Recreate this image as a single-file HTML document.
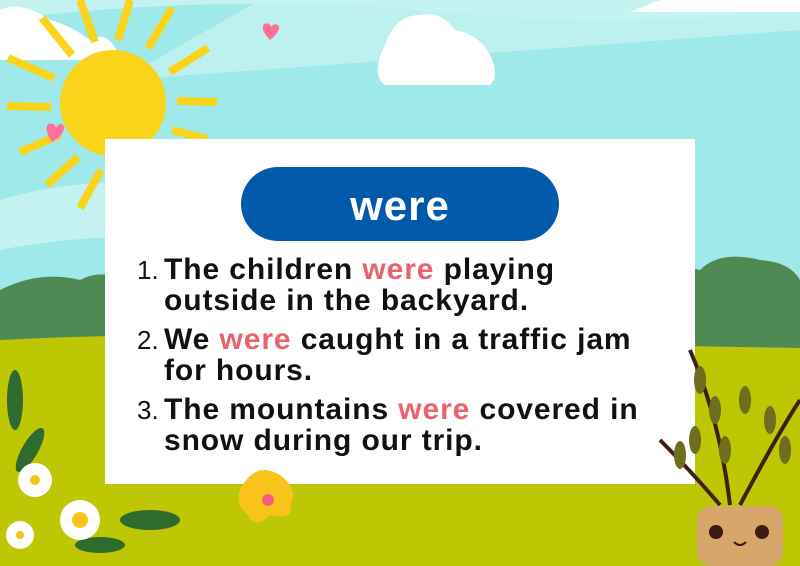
<!DOCTYPE html>
<html><head><style>
*{margin:0;padding:0}
body{width:800px;height:566px;overflow:hidden;position:relative;background:#9fe9ea;font-family:"Liberation Sans",sans-serif}
.abs{position:absolute}
.li{position:absolute;left:137px;font-weight:bold;font-size:30px;letter-spacing:0.9px;line-height:31px;color:#111;white-space:nowrap}
.li .n{display:inline-block;width:27px;font-weight:normal;letter-spacing:0;font-size:26px}
.li .t{display:inline-block;vertical-align:top}
.r{color:#e8636b}
</style></head><body>
<svg class="abs" style="left:0;top:0" width="800" height="566">
<path d="M0 0H800V10Q600 30 400 8Q200 -5 0 20Z" fill="#c4f2f1"/>
<path d="M120 80Q400 60 800 30V0H260Z" fill="#c4f2f1" opacity=".8"/>
<path d="M0 200Q100 170 220 190V240Q100 230 0 250Z" fill="#c4f2f1"/>
<path d="M0 10Q20 0 50 20Q70 25 90 40Q110 28 120 60H0Z" fill="#fff"/>
<path d="M385 45Q395 15 420 15Q440 10 455 30Q480 35 490 55Q500 75 490 85H385Q370 75 385 45Z" fill="#fff"/>
<path d="M660 0H800V12H630Z" fill="#fff"/>
<path d="M0 290Q40 270 80 280Q110 265 130 290V400H0Z" fill="#4f8a55"/>
<path d="M640 300Q660 260 700 270Q720 250 760 260Q790 262 800 280V360H640Z" fill="#4f8a55"/>
<path d="M0 340Q200 330 400 340Q600 345 800 348V566H0Z" fill="#bec703"/>
<g stroke="#f9d41a" stroke-width="8" stroke-linecap="butt">
<line x1="80" y1="0" x2="95" y2="42"/><line x1="130" y1="0" x2="118" y2="40"/>
<line x1="172" y1="8" x2="148" y2="48"/><line x1="42" y1="18" x2="72" y2="55"/>
<line x1="8" y1="58" x2="54" y2="78"/><line x1="208" y1="48" x2="170" y2="72"/>
<line x1="7" y1="106" x2="51" y2="107"/><line x1="177" y1="101" x2="217" y2="102"/>
<line x1="20" y1="152" x2="60" y2="135"/><line x1="172" y1="130" x2="207" y2="139"/>
<line x1="78" y1="157" x2="47" y2="185"/><line x1="155" y1="150" x2="187" y2="176"/>
<line x1="101" y1="170" x2="80" y2="208"/><line x1="129" y1="163" x2="140" y2="206"/>
</g>
<circle cx="113" cy="103" r="53" fill="#f9d41a"/>
<path d="M270 40Q260 30 264 24Q270 22 271 27Q275 22 279 26Q280 32 270 40Z" fill="#ff6f9c"/>
<path d="M52 142Q44 130 48 124Q54 122 56 128Q60 121 64 126Q65 135 52 142Z" fill="#ff6f9c"/>
<rect x="105" y="139" width="590" height="345" fill="#fff"/>
<rect x="241" y="167" width="318" height="74" rx="37" fill="#0059ab"/>
<text x="400" y="220" text-anchor="middle" fill="#fff" font-family="Liberation Sans" font-weight="bold" font-size="42" letter-spacing="1">were</text>
<g fill="#2f6b2e"><ellipse cx="15" cy="400" rx="8" ry="30"/><ellipse cx="30" cy="450" rx="8" ry="25" transform="rotate(30 30 450)"/><ellipse cx="150" cy="520" rx="30" ry="10"/><ellipse cx="100" cy="545" rx="25" ry="8"/></g>
<g fill="#fff"><circle cx="35" cy="480" r="17"/><circle cx="80" cy="520" r="20"/><circle cx="20" cy="535" r="14"/></g>
<circle cx="35" cy="480" r="5" fill="#f9c41a"/><circle cx="80" cy="520" r="8" fill="#f9c41a"/><circle cx="20" cy="535" r="4" fill="#f9c41a"/>
<path d="M240 490Q255 460 280 475Q300 490 290 505Q295 520 270 515Q255 530 248 515Q235 505 240 490Z" fill="#f9c41a"/>
<circle cx="268" cy="500" r="6" fill="#f2607f"/>
<g stroke="#3e2211" stroke-width="4" fill="none"><path d="M730 505Q720 420 690 350"/><path d="M740 505Q780 430 800 400"/><path d="M720 505Q690 470 660 440"/></g>
<g fill="#6e6e1e"><ellipse cx="700" cy="380" rx="6" ry="14"/><ellipse cx="715" cy="410" rx="6" ry="14"/><ellipse cx="695" cy="440" rx="6" ry="14"/><ellipse cx="725" cy="450" rx="6" ry="14"/><ellipse cx="770" cy="420" rx="6" ry="14"/><ellipse cx="785" cy="450" rx="6" ry="14"/><ellipse cx="680" cy="455" rx="6" ry="14"/><ellipse cx="745" cy="400" rx="6" ry="14"/></g>
<rect x="697" y="506" width="86" height="60" rx="14" fill="#d6a66a"/>
<circle cx="716" cy="532" r="7" fill="#3b1c10"/><circle cx="762" cy="532" r="7" fill="#3b1c10"/>
<path d="M734 542Q740 548 746 542" stroke="#3b1c10" stroke-width="2" fill="none"/>
</svg>
<div class="li" style="top:254px"><span class="n">1.</span><span class="t">The children <span class="r">were</span> playing<br>outside in the backyard.</span></div>
<div class="li" style="top:324px"><span class="n">2.</span><span class="t">We <span class="r">were</span> caught in a traffic jam<br>for hours.</span></div>
<div class="li" style="top:394px"><span class="n">3.</span><span class="t">The mountains <span class="r">were</span> covered in<br>snow during our trip.</span></div>
</body></html>
